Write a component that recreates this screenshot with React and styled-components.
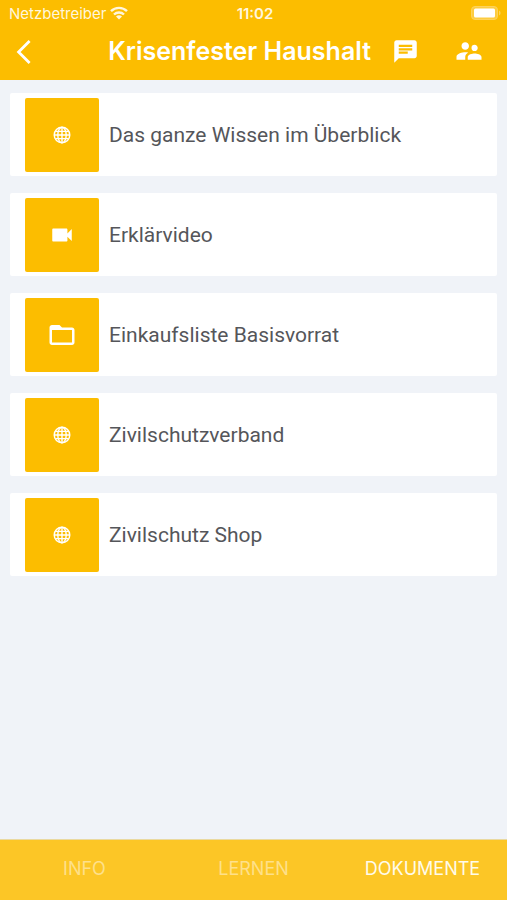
import React from "react";
import styled, { createGlobalStyle } from "styled-components";
import {
  MdChat,
  MdSupervisorAccount,
  MdVideocam,
  MdFolderOpen
} from "react-icons/md";

const GlobalStyle = createGlobalStyle`
  * {
    box-sizing: border-box;
  }

  body {
    margin: 0;
    background: #f0f3f8;
    font-family: Inter, "Liberation Sans", sans-serif;
  }
`;

const Screen = styled.div`
  display: flex;
  flex-direction: column;
  min-height: 100vh;
`;

const Header = styled.header`
  background: #fcbd00;
  color: white;
`;

const StatusBar = styled.div`
  display: grid;
  grid-template-columns: 1fr auto 1fr;
  align-items: center;
  height: 26px;
  padding: 0 6px 0 9px;
  font-size: 15px;
  color: #fff6dc;

  .carrier {
    display: flex;
    align-items: center;
    gap: 4px;
  }

  .time {
    font-weight: 600;
  }

  .battery {
    display: flex;
    justify-content: flex-end;
  }
`;

const Toolbar = styled.div`
  display: flex;
  align-items: center;
  height: 54px;
  padding: 0 23px 4px 10px;

  h1 {
    flex: 1;
    margin: 0 21px 0 0;
    font-size: 25px;
    font-weight: 600;
    line-height: 32px;
    text-align: right;
    white-space: nowrap;
  }
`;

const IconButton = styled.button`
  display: flex;
  padding: 0;
  margin-left: ${props => props.$gap || "0"};
  border: none;
  background: none;
  color: white;
  cursor: pointer;
`;

const List = styled.ul`
  flex: 1;
  display: flex;
  flex-direction: column;
  gap: 17px;
  margin: 0;
  padding: 13px 10px;
  list-style: none;
`;

const Card = styled.a`
  display: flex;
  align-items: center;
  gap: 10px;
  height: 83px;
  padding: 0 15px;
  border-radius: 2px;
  background: white;
  color: #55565a;
  font-family: Roboto, "Liberation Sans", sans-serif;
  font-size: 21px;
  text-decoration: none;
`;

const Tile = styled.span`
  display: flex;
  align-items: center;
  justify-content: center;
  width: 74px;
  height: 74px;
  border-radius: 2px;
  background: #fcbd00;
  color: white;
`;

const Tabs = styled.nav`
  display: grid;
  grid-template-columns: repeat(3, 1fr);
  height: 61px;
  border-top: 1px solid #ead9a0;
  background: #fcc626;
`;

const Tab = styled.button`
  padding: 0 0 4px;
  border: none;
  background: none;
  color: ${props => (props.$active ? "#fffbea" : "#fee08a")};
  font-family: inherit;
  font-size: 18px;
  cursor: pointer;
`;

const Wifi = () => (
  <svg width="18" height="14" viewBox="0 0 18 14" fill="none" stroke="currentColor" strokeWidth="2.4">
    <path d="M1 5.2a11.4 11.4 0 0 1 16 0" />
    <path d="M4 8.5a7.2 7.2 0 0 1 10 0" />
    <path d="M9 13.6L6 10.6a4.3 4.3 0 0 1 6 0z" fill="currentColor" stroke="none" />
  </svg>
);

const Battery = () => (
  <svg width="30" height="14" viewBox="0 0 30 14">
    <rect x="0.5" y="0.5" width="26" height="13" rx="3.5" fill="#fdcc40" stroke="#fdd35c" />
    <rect x="3" y="2.5" width="21" height="9" rx="1.5" fill="white" />
    <path d="M28 4.5q1.6.8 1.6 2.5t-1.6 2.5z" fill="#fdd35c" />
  </svg>
);

const Chevron = () => (
  <svg width="26" height="26" viewBox="0 0 26 26" fill="none" stroke="currentColor" strokeWidth="2.8">
    <path d="M19.6 3L8.6 14l11 11" />
  </svg>
);

const Globe = () => (
  <svg width="18" height="18" viewBox="0 0 18 18" fill="none" stroke="currentColor" strokeWidth="1.4">
    <circle cx="9" cy="9" r="7.8" />
    <ellipse cx="9" cy="9" rx="4.2" ry="7.8" />
    <path d="M9 1.3v15.4M1.3 9h15.4M2.4 5.4h13.2M2.4 12.6h13.2" />
  </svg>
);

const documents = [
  { title: "Das ganze Wissen im Überblick", icon: <Globe /> },
  { title: "Erklärvideo", icon: <MdVideocam size={26} /> },
  { title: "Einkaufsliste Basisvorrat", icon: <MdFolderOpen size={30} /> },
  { title: "Zivilschutzverband", icon: <Globe /> },
  { title: "Zivilschutz Shop", icon: <Globe /> }
];

const tabs = ["INFO", "LERNEN", "DOKUMENTE"];

const App = () => {
  const [active, setActive] = React.useState("DOKUMENTE");

  return (
    <Screen>
      <GlobalStyle />
      <Header>
        <StatusBar>
          <span className="carrier">
            Netzbetreiber <Wifi />
          </span>
          <span className="time">11:02</span>
          <span className="battery">
            <Battery />
          </span>
        </StatusBar>
        <Toolbar>
          <IconButton aria-label="Zurück">
            <Chevron />
          </IconButton>
          <h1>Krisenfester Haushalt</h1>
          <IconButton aria-label="Chat">
            <MdChat size={27} />
          </IconButton>
          <IconButton aria-label="Gruppe" $gap="35px">
            <MdSupervisorAccount size={30} />
          </IconButton>
        </Toolbar>
      </Header>
      <List>
        {documents.map(doc => (
          <li key={doc.title}>
            <Card href="#">
              <Tile>{doc.icon}</Tile>
              {doc.title}
            </Card>
          </li>
        ))}
      </List>
      <Tabs>
        {tabs.map(tab => (
          <Tab key={tab} $active={tab === active} onClick={() => setActive(tab)}>
            {tab}
          </Tab>
        ))}
      </Tabs>
    </Screen>
  );
};

export default App;
